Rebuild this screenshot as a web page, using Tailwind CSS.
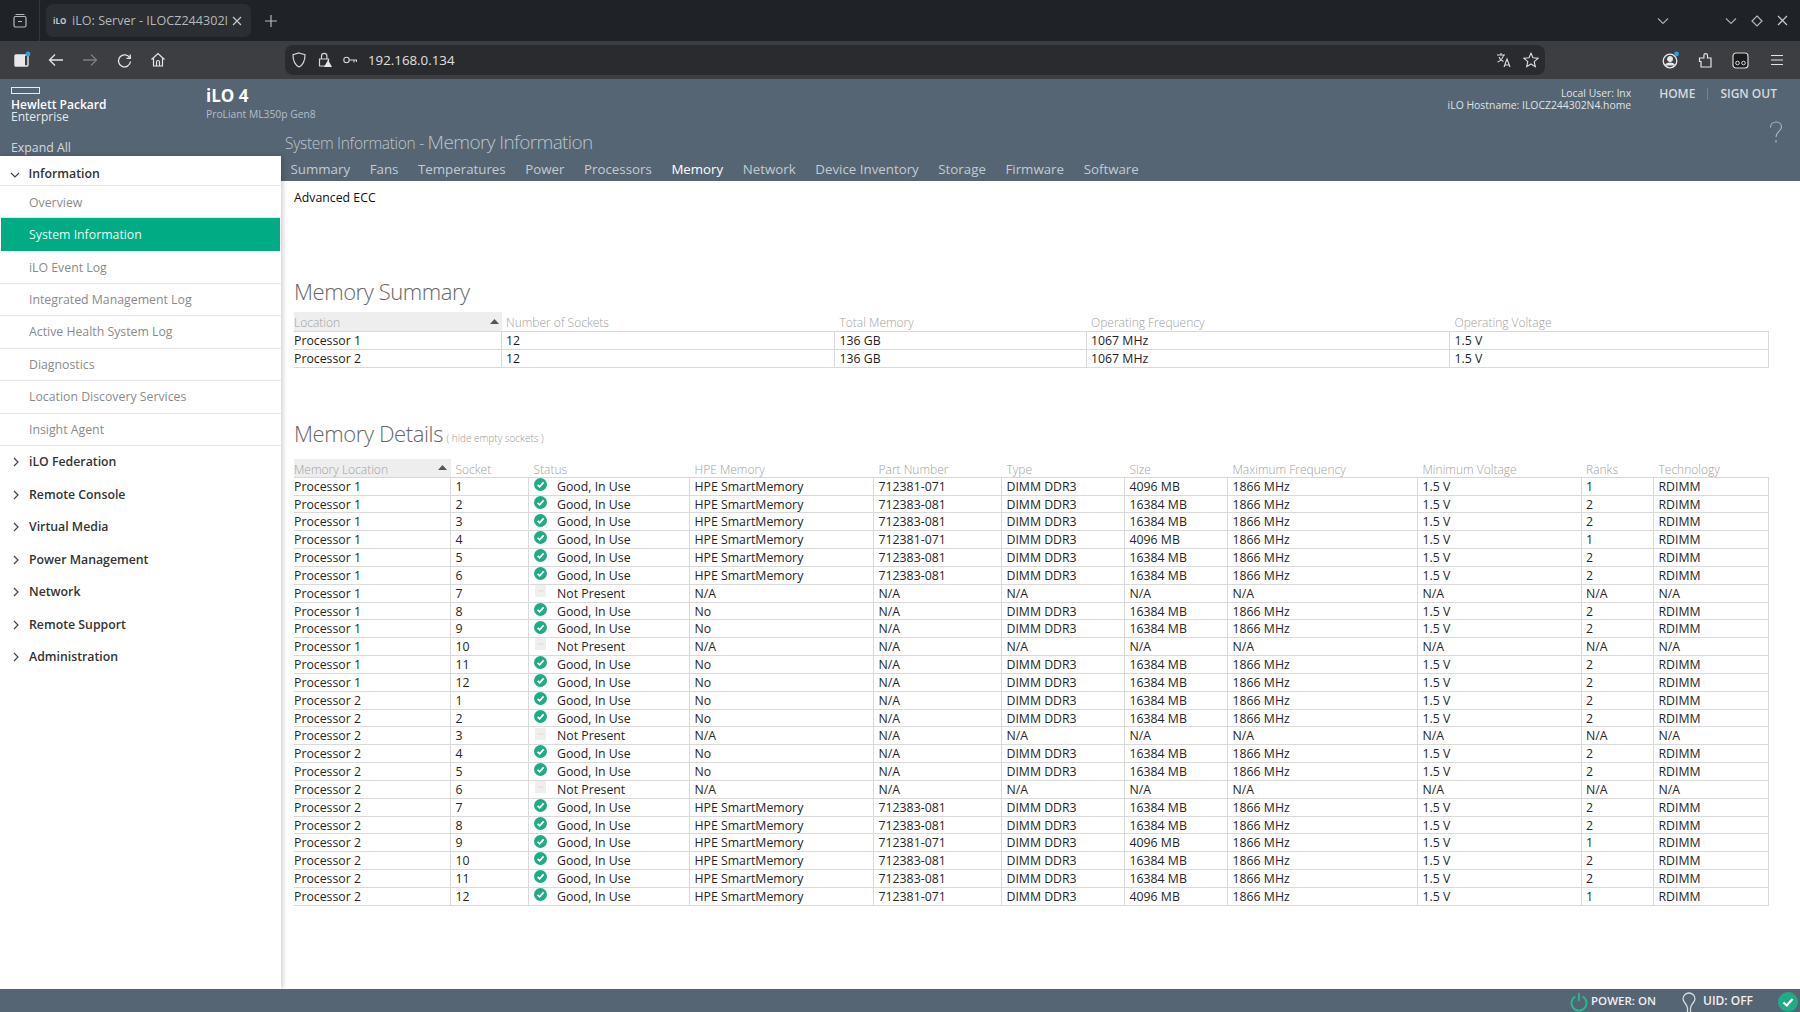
<!DOCTYPE html>
<html><head><meta charset="utf-8"><title>iLO</title>
<script src="https://cdn.jsdelivr.net/npm/@tailwindcss/browser@4"></script></head>
<body class="bg-white">
<svg class="hidden"><defs>
<symbol id="ok" viewBox="0 0 13 13"><circle cx="6.5" cy="6.5" r="6.5" fill="#1fab85"/><path d="M3.6 6.8 5.7 8.8 9.6 4.4" fill="none" stroke="#fff" stroke-width="1.8"/></symbol>
<symbol id="np" viewBox="0 0 13 13"><rect x="1" y="0" width="11" height="12" rx="1" fill="#efefef"/><rect x="3.5" y="5.5" width="6" height="1" fill="#dcdcdc"/></symbol>
<symbol id="cr" viewBox="0 0 8 12"><path d="M2 2 6 6 2 10" fill="none" stroke="#444" stroke-width="1.2"/></symbol>
</defs></svg>
<div class="w-[1800px] h-[1012px] flex flex-col overflow-hidden font-['Open_Sans',sans-serif] text-[12.3px]">

<!-- tab strip -->
<div class="h-[41px] bg-[#1f2226] flex items-center text-[#b9bcbf] shrink-0">
  <div class="w-[40px] h-full flex items-center justify-center border-r border-[#33363a]"><svg width="16" height="16" viewBox="0 0 16 16" fill="none" stroke="#b5b8bb" stroke-width="1.2"><rect x="2" y="3.5" width="12" height="10.5" rx="1.5"/><path d="M3.5 1.5h9M6 8.5h4"/></svg></div>
  <div class="ml-[6px] w-[205px] h-[33px] bg-[#2b2e32] rounded-[7px] flex items-center pl-[7px] pr-[9px] gap-[4px]">
    <span class="text-[8px] font-bold text-[#c9c9c9] w-[15px] shrink-0">iLO</span>
    <span class="text-[12.600px] flex-1 whitespace-nowrap text-[#b5b8bb] pt-[1px]">iLO: Server - ILOCZ244302I</span>
    <svg width="10" height="10" viewBox="0 0 10 10" stroke="#c4c6c8" stroke-width="1.3" class="shrink-0"><path d="M1 1 9 9M9 1 1 9"/></svg>
  </div>
  <div class="ml-[13px]"><svg width="14" height="14" viewBox="0 0 14 14" stroke="#b5b8bb" stroke-width="1.2"><path d="M7 1v12M1 7h12"/></svg></div>
  <div class="flex-1"></div>
  <svg width="12" height="8" viewBox="0 0 12 8" fill="none" stroke="#a8abae" stroke-width="1.2" class="mr-[56px]"><path d="M1 1.5 6 6.5 11 1.5"/></svg>
  <svg width="12" height="8" viewBox="0 0 12 8" fill="none" stroke="#a8abae" stroke-width="1.2" class="mr-[14px]"><path d="M1 1.5 6 6.5 11 1.5"/></svg>
  <svg width="12" height="12" viewBox="0 0 12 12" fill="none" stroke="#b5b8bb" stroke-width="1.2" class="mr-[14px]"><path d="M6 1 11 6 6 11 1 6Z"/></svg>
  <svg width="11" height="11" viewBox="0 0 11 11" fill="none" stroke="#c4c6c8" stroke-width="1.3" class="mr-[12px]"><path d="M1 1 10 10M10 1 1 10"/></svg>
</div>

<!-- toolbar -->
<div class="h-[38px] bg-[#3c3e41] flex items-center shrink-0 pl-[5px]">
  <div class="w-[34px] flex justify-center"><svg width="18" height="18" viewBox="0 0 18 18"><rect x="2" y="4" width="13" height="11" rx="1" fill="none" stroke="#e8e8e8" stroke-width="1.4"/><rect x="2" y="4" width="10" height="11" fill="#e8e8e8"/><circle cx="15" cy="3" r="2.4" fill="#2f9fe0"/></svg></div>
  <div class="w-[34px] flex justify-center"><svg width="16" height="14" viewBox="0 0 16 14" fill="none" stroke="#e4e4e4" stroke-width="1.3"><path d="M15 7H2M7 1.5 1.5 7 7 12.5"/></svg></div>
  <div class="w-[34px] flex justify-center"><svg width="16" height="14" viewBox="0 0 16 14" fill="none" stroke="#7b7d80" stroke-width="1.3"><path d="M1 7h13M9 1.5 14.500 7 9 12.500"/></svg></div>
  <div class="w-[34px] flex justify-center"><svg width="15" height="15" viewBox="0 0 15 15" fill="none" stroke="#e4e4e4" stroke-width="1.3"><path d="M12.800 5A6 6 0 1 0 13.500 8.500M13.300 1.500V5.300H9.500"/></svg></div>
  <div class="w-[34px] flex justify-center"><svg width="16" height="16" viewBox="0 0 16 16" fill="none" stroke="#e4e4e4" stroke-width="1.2"><path d="M1.500 7.500 8 1.500 14.500 7.500M3.500 6v8h9V6M6.500 14v-4a1.500 1.500 0 0 1 3 0v4"/></svg></div>
  <div class="ml-[110px] w-[1260px] h-[30px] bg-[#2a2b2e] rounded-[8px] flex items-center">
    <div class="w-[28px] flex justify-center"><svg width="14" height="16" viewBox="0 0 14 16" fill="none" stroke="#d4d4d4" stroke-width="1.2"><path d="M7 1 13 2.800C13 9 11 13 7 15 3 13 1 9 1 2.800Z"/></svg></div>
    <div class="w-[24px] flex justify-center"><svg width="14" height="16" viewBox="0 0 14 16"><path d="M3.500 7V4a2.700 2.700 0 0 1 5.400 0v3M1.500 7h9v7h-9Z" fill="none" stroke="#d4d4d4" stroke-width="1.2"/><path d="M10 8 14 15H6Z" fill="#e6e6e6"/></svg></div>
    <div class="w-[26px] flex justify-center"><svg width="15" height="8" viewBox="0 0 15 8" fill="none" stroke="#d4d4d4" stroke-width="1.1"><circle cx="3.500" cy="4" r="2.700"/><path d="M6.200 4H14M11 4v2.500M13.500 4v2"/></svg></div>
    <span class="ml-[5px] pt-[1px] text-[13.300px] text-[#e0e0e0]">192.168.0.134</span>
    <div class="flex-1"></div>
    <svg width="16" height="16" viewBox="0 0 16 16" fill="none" stroke="#e0e0e0" stroke-width="1.1" class="mr-[11px]"><path d="M1 3h8M5 1v2M7.500 3C7 6 4 9 1.500 10M3 5c1 2.500 3 4 4.500 4.500M8 15l3-8 3 8M9 13h4"/></svg>
    <svg width="16" height="16" viewBox="0 0 16 16" fill="none" stroke="#e0e0e0" stroke-width="1.1" class="mr-[6px]"><path d="M8 1.300 10 5.800 15 6.300 11.200 9.600 12.300 14.600 8 12 3.700 14.600 4.800 9.600 1 6.300 6 5.800Z"/></svg>
  </div>
  <div class="flex-1"></div>
  <div class="w-[34px] flex justify-center"><svg width="18" height="18" viewBox="0 0 18 18" fill="none" stroke="#e8e8e8" stroke-width="1.3"><circle cx="8" cy="10" r="6.800"/><circle cx="8" cy="8" r="2.300" fill="#e8e8e8"/><path d="M3.500 14.500c1-3 8-3 9 0" fill="#e8e8e8"/><circle cx="14.500" cy="3" r="2.400" fill="#2f9fe0" stroke="none"/></svg></div>
  <div class="w-[35px] flex justify-center"><svg width="16" height="16" viewBox="0 0 16 16" fill="none" stroke="#e4e4e4" stroke-width="1.2"><path d="M3 15h10V6H9.500V3.500a1.800 1.800 0 0 0-3.600 0V6H1.500v3.500H3Z"/></svg></div>
  <div class="w-[35px] flex justify-center"><svg width="17" height="17" viewBox="0 0 17 17"><rect x="1" y="1" width="15" height="15" rx="3" fill="#1b1b1d" stroke="#d8d8d8" stroke-width="1.2"/><circle cx="5.500" cy="11" r="1.800" fill="none" stroke="#d8d8d8"/><circle cx="11.500" cy="11" r="1.800" fill="none" stroke="#d8d8d8"/></svg></div>
  <div class="w-[37px] flex justify-center mr-[5px]"><svg width="14" height="12" viewBox="0 0 14 12" stroke="#e4e4e4" stroke-width="1.2"><path d="M1 1.500h12M1 6h12M1 10.500h12"/></svg></div>
</div>

<!-- top of app -->
<div class="h-[49px] bg-[#566573] flex shrink-0">
  <div class="w-[206px] shrink-0 pl-[11px] pt-[8px] leading-none">
    <div class="w-[29px] h-[7px] border-[1.5px] border-[#e8ecef]"></div>
    <div class="mt-[4px] text-[12px] font-semibold text-white leading-[13px] whitespace-nowrap">Hewlett Packard</div>
    <div class="text-[12px] text-[#e6e9ec] leading-[12px]">Enterprise</div>
  </div>
  <div class="pt-[6px]">
    <div class="text-[17px] font-bold text-white leading-[21px]">iLO 4</div>
    <div class="text-[10.300px] text-[#b4bec7] leading-[14px] pt-[0.5px]">ProLiant ML350p Gen8</div>
  </div>
  <div class="flex-1"></div>
  <div class="pt-[7.500px] text-[10.400px] text-[#dfe3e7] leading-[12px] text-right">
    <div>Local User: lnx</div>
    <div>iLO Hostname: ILOCZ244302N4.home</div>
  </div>
  <div class="ml-[28px] mr-[23px] mt-[7.500px] h-[14px] flex items-center text-[12px] font-semibold text-[#d5dade]">
    <span>HOME</span><span class="w-px h-[12px] bg-[#76838f] mx-[12px]"></span><span>SIGN OUT</span>
  </div>
</div>

<div class="h-[861px] flex shrink-0">
  <!-- left -->
  <div class="w-[281px] shrink-0 flex flex-col relative z-10">
    <div class="h-[28px] bg-[#566573] pl-[11px] text-[12.300px] text-[#d3d8dd] leading-[39px] shrink-0">Expand All</div>
    <div class="flex-1 bg-white shadow-[2px_0_5px_rgba(0,0,0,0.18)] text-[12.300px] text-[#8b8b8b]">
      <div class="h-[30px] pt-[8px] flex items-center border-b border-[#e6e6e6] font-semibold text-[#333]"><svg width="12" height="8" viewBox="0 0 12 8" fill="none" stroke="#444" stroke-width="1.200" class="ml-[9px] mr-[7.500px]"><path d="M2 2 6 6 10 2"/></svg>Information</div>
      <div class="h-[32px] pt-[4px] flex items-center pl-[29px] border-b border-[#e6e6e6]">Overview</div>
      <div class="h-[33px] pt-[2px] flex items-center pl-[28px] bg-[#01ac85] text-[#e6f7f2] mx-px">System Information</div>
      <div class="h-[32.500px] pt-[3px] flex items-center pl-[29px] border-b border-[#e6e6e6]">iLO Event Log</div>
      <div class="h-[32.500px] pt-[2px] flex items-center pl-[29px] border-b border-[#e6e6e6]">Integrated Management Log</div>
      <div class="h-[32.500px] pt-[1px] flex items-center pl-[29px] border-b border-[#e6e6e6]">Active Health System Log</div>
      <div class="h-[32.500px] pt-[2px] flex items-center pl-[29px] border-b border-[#e6e6e6]">Diagnostics</div>
      <div class="h-[32.500px] pt-[1px] flex items-center pl-[29px] border-b border-[#e6e6e6]">Location Discovery Services</div>
      <div class="h-[32.500px] pt-[2px] flex items-center pl-[29px] border-b border-[#e6e6e6]">Insight Agent</div>
      <div class="text-[#333] font-semibold [&>div]:h-[32.500px] [&>div]:flex [&>div]:items-center [&>div]:pl-[12px] [&_svg]:w-[8px] [&_svg]:h-[12px] [&_svg]:mr-[9px]">
        <div><svg><use href="#cr"/></svg>iLO Federation</div>
        <div><svg><use href="#cr"/></svg>Remote Console</div>
        <div><svg><use href="#cr"/></svg>Virtual Media</div>
        <div><svg><use href="#cr"/></svg>Power Management</div>
        <div><svg><use href="#cr"/></svg>Network</div>
        <div><svg><use href="#cr"/></svg>Remote Support</div>
        <div><svg><use href="#cr"/></svg>Administration</div>
      </div>
    </div>
  </div>
  <!-- right -->
  <div class="flex-1 flex flex-col min-w-0">
    <div class="h-[28px] bg-[#566573] pl-[4px] flex items-center justify-between text-[#bcc5cc] font-light shrink-0 whitespace-nowrap">
      <div class="flex items-baseline"><span class="text-[15.500px] tracking-[-0.3px]">System Information -&nbsp;</span><span class="text-[19px] tracking-[-0.6px]">Memory Information</span></div>
      <svg width="14" height="24" viewBox="0 0 14 24" fill="none" stroke="#aab4bd" stroke-width="1.200" class="mr-[17px] -mt-[18px] relative"><path d="M1.500 6.500C1.500 3 4 1 7 1s5.500 2 5.500 5c0 4-5.500 4.500-5.500 10"/><path d="M7 19v2.500"/></svg>
    </div>
    <div class="h-[25px] pt-[2px] bg-[#566573] flex items-center pl-[9.500px] text-[13.300px] text-[#c3cbd2] shrink-0 [&>span]:mr-[19.600px] whitespace-nowrap">
      <span>Summary</span><span>Fans</span><span>Temperatures</span><span>Power</span><span>Processors</span><span class="text-white">Memory</span><span>Network</span><span>Device Inventory</span><span>Storage</span><span>Firmware</span><span>Software</span>
    </div>
    <div class="flex-1 bg-white pl-[13px] pr-[31px] text-[#1d1d1d]">
      <div class="pt-[8px] leading-[18px] text-[#111]">Advanced ECC</div>
      <div class="mt-[66.500px] text-[22px] tracking-[-0.45px] leading-[34px] font-light text-[#666]">Memory Summary</div>
      <div class="mt-[4.500px] h-[20px] grid grid-rows-[20px] grid-cols-[207.500px_333.500px_251.500px_363.500px_319px] text-[12px] text-[#a2a2a2] font-light leading-[22px] [&>div]:pl-[4.500px] [&>div:first-child]:pl-0 [&>div]:border-b [&>div]:border-[#d8d8d8]">
        <div class="bg-[#eeeeee] flex justify-between items-start pr-[3px]">Location<svg width="9" height="14" viewBox="0 0 9 14" fill="#555" class="mt-[5px]"><path d="M0 7 4.500 2 9 7Z"/></svg></div><div>Number of Sockets</div><div>Total Memory</div><div>Operating Frequency</div><div>Operating Voltage</div>
      </div>
      <div class="grid grid-cols-[207.500px_333.500px_251.500px_363.500px_319px] auto-rows-[17.800px] leading-[18px] [&>div]:pl-[4.500px] [&>div:nth-child(5n+1)]:pl-0 [&>div]:border-b [&>div]:border-r [&>div]:border-[#dadada]">
        <div>Processor 1</div><div>12</div><div>136 GB</div><div>1067 MHz</div><div>1.5 V</div>
        <div>Processor 2</div><div>12</div><div>136 GB</div><div>1067 MHz</div><div>1.5 V</div>
      </div>
      <div class="mt-[48.700px] flex items-baseline whitespace-nowrap h-[35px] leading-[35px]"><span class="text-[22px] tracking-[-0.4px] font-light text-[#666]">Memory Details</span><span class="ml-[3.500px] text-[10px] font-light text-[#999]">( hide empty sockets )</span></div>
      <div class="mt-[7.500px] h-[19px] grid grid-rows-[19px] grid-cols-[157px_78px_161px_184px_128px_123px_103px_190px_163.500px_72.500px_115px] text-[12px] text-[#a2a2a2] font-light leading-[22px] [&>div]:pl-[4.500px] [&>div:first-child]:pl-0 [&>div]:border-b [&>div]:border-[#d8d8d8] whitespace-nowrap">
        <div class="bg-[#eeeeee] flex justify-between items-start pr-[4px]">Memory Location<svg width="9" height="14" viewBox="0 0 9 14" fill="#555" class="mt-[4px]"><path d="M0 7 4.500 2 9 7Z"/></svg></div><div>Socket</div><div>Status</div><div>HPE Memory</div><div>Part Number</div><div>Type</div><div>Size</div><div>Maximum Frequency</div><div>Minimum Voltage</div><div>Ranks</div><div>Technology</div>
      </div>
      <div class="grid grid-cols-[157px_78px_161px_184px_128px_123px_103px_190px_163.500px_72.500px_115px] auto-rows-[17.830px] leading-[18px] text-[#262626] whitespace-nowrap [&>div]:pl-[4.500px] [&>div:nth-child(11n+1)]:pl-0 [&>div]:border-b [&>div]:border-r [&>div]:border-[#dadada] [&_svg]:w-[13px] [&_svg]:h-[13px] [&_svg]:mr-[10px] [&_svg]:-mt-[6px] [&_svg]:ml-[0.500px] [&_svg]:inline-block">
<div>Processor 1</div><div>1</div><div><svg><use href="#ok"/></svg>Good, In Use</div><div>HPE SmartMemory</div><div>712381-071</div><div>DIMM DDR3</div><div>4096 MB</div><div>1866 MHz</div><div>1.5 V</div><div>1</div><div>RDIMM</div>
<div>Processor 1</div><div>2</div><div><svg><use href="#ok"/></svg>Good, In Use</div><div>HPE SmartMemory</div><div>712383-081</div><div>DIMM DDR3</div><div>16384 MB</div><div>1866 MHz</div><div>1.5 V</div><div>2</div><div>RDIMM</div>
<div>Processor 1</div><div>3</div><div><svg><use href="#ok"/></svg>Good, In Use</div><div>HPE SmartMemory</div><div>712383-081</div><div>DIMM DDR3</div><div>16384 MB</div><div>1866 MHz</div><div>1.5 V</div><div>2</div><div>RDIMM</div>
<div>Processor 1</div><div>4</div><div><svg><use href="#ok"/></svg>Good, In Use</div><div>HPE SmartMemory</div><div>712381-071</div><div>DIMM DDR3</div><div>4096 MB</div><div>1866 MHz</div><div>1.5 V</div><div>1</div><div>RDIMM</div>
<div>Processor 1</div><div>5</div><div><svg><use href="#ok"/></svg>Good, In Use</div><div>HPE SmartMemory</div><div>712383-081</div><div>DIMM DDR3</div><div>16384 MB</div><div>1866 MHz</div><div>1.5 V</div><div>2</div><div>RDIMM</div>
<div>Processor 1</div><div>6</div><div><svg><use href="#ok"/></svg>Good, In Use</div><div>HPE SmartMemory</div><div>712383-081</div><div>DIMM DDR3</div><div>16384 MB</div><div>1866 MHz</div><div>1.5 V</div><div>2</div><div>RDIMM</div>
<div>Processor 1</div><div>7</div><div><svg><use href="#np"/></svg>Not Present</div><div>N/A</div><div>N/A</div><div>N/A</div><div>N/A</div><div>N/A</div><div>N/A</div><div>N/A</div><div>N/A</div>
<div>Processor 1</div><div>8</div><div><svg><use href="#ok"/></svg>Good, In Use</div><div>No</div><div>N/A</div><div>DIMM DDR3</div><div>16384 MB</div><div>1866 MHz</div><div>1.5 V</div><div>2</div><div>RDIMM</div>
<div>Processor 1</div><div>9</div><div><svg><use href="#ok"/></svg>Good, In Use</div><div>No</div><div>N/A</div><div>DIMM DDR3</div><div>16384 MB</div><div>1866 MHz</div><div>1.5 V</div><div>2</div><div>RDIMM</div>
<div>Processor 1</div><div>10</div><div><svg><use href="#np"/></svg>Not Present</div><div>N/A</div><div>N/A</div><div>N/A</div><div>N/A</div><div>N/A</div><div>N/A</div><div>N/A</div><div>N/A</div>
<div>Processor 1</div><div>11</div><div><svg><use href="#ok"/></svg>Good, In Use</div><div>No</div><div>N/A</div><div>DIMM DDR3</div><div>16384 MB</div><div>1866 MHz</div><div>1.5 V</div><div>2</div><div>RDIMM</div>
<div>Processor 1</div><div>12</div><div><svg><use href="#ok"/></svg>Good, In Use</div><div>No</div><div>N/A</div><div>DIMM DDR3</div><div>16384 MB</div><div>1866 MHz</div><div>1.5 V</div><div>2</div><div>RDIMM</div>
<div>Processor 2</div><div>1</div><div><svg><use href="#ok"/></svg>Good, In Use</div><div>No</div><div>N/A</div><div>DIMM DDR3</div><div>16384 MB</div><div>1866 MHz</div><div>1.5 V</div><div>2</div><div>RDIMM</div>
<div>Processor 2</div><div>2</div><div><svg><use href="#ok"/></svg>Good, In Use</div><div>No</div><div>N/A</div><div>DIMM DDR3</div><div>16384 MB</div><div>1866 MHz</div><div>1.5 V</div><div>2</div><div>RDIMM</div>
<div>Processor 2</div><div>3</div><div><svg><use href="#np"/></svg>Not Present</div><div>N/A</div><div>N/A</div><div>N/A</div><div>N/A</div><div>N/A</div><div>N/A</div><div>N/A</div><div>N/A</div>
<div>Processor 2</div><div>4</div><div><svg><use href="#ok"/></svg>Good, In Use</div><div>No</div><div>N/A</div><div>DIMM DDR3</div><div>16384 MB</div><div>1866 MHz</div><div>1.5 V</div><div>2</div><div>RDIMM</div>
<div>Processor 2</div><div>5</div><div><svg><use href="#ok"/></svg>Good, In Use</div><div>No</div><div>N/A</div><div>DIMM DDR3</div><div>16384 MB</div><div>1866 MHz</div><div>1.5 V</div><div>2</div><div>RDIMM</div>
<div>Processor 2</div><div>6</div><div><svg><use href="#np"/></svg>Not Present</div><div>N/A</div><div>N/A</div><div>N/A</div><div>N/A</div><div>N/A</div><div>N/A</div><div>N/A</div><div>N/A</div>
<div>Processor 2</div><div>7</div><div><svg><use href="#ok"/></svg>Good, In Use</div><div>HPE SmartMemory</div><div>712383-081</div><div>DIMM DDR3</div><div>16384 MB</div><div>1866 MHz</div><div>1.5 V</div><div>2</div><div>RDIMM</div>
<div>Processor 2</div><div>8</div><div><svg><use href="#ok"/></svg>Good, In Use</div><div>HPE SmartMemory</div><div>712383-081</div><div>DIMM DDR3</div><div>16384 MB</div><div>1866 MHz</div><div>1.5 V</div><div>2</div><div>RDIMM</div>
<div>Processor 2</div><div>9</div><div><svg><use href="#ok"/></svg>Good, In Use</div><div>HPE SmartMemory</div><div>712381-071</div><div>DIMM DDR3</div><div>4096 MB</div><div>1866 MHz</div><div>1.5 V</div><div>1</div><div>RDIMM</div>
<div>Processor 2</div><div>10</div><div><svg><use href="#ok"/></svg>Good, In Use</div><div>HPE SmartMemory</div><div>712383-081</div><div>DIMM DDR3</div><div>16384 MB</div><div>1866 MHz</div><div>1.5 V</div><div>2</div><div>RDIMM</div>
<div>Processor 2</div><div>11</div><div><svg><use href="#ok"/></svg>Good, In Use</div><div>HPE SmartMemory</div><div>712383-081</div><div>DIMM DDR3</div><div>16384 MB</div><div>1866 MHz</div><div>1.5 V</div><div>2</div><div>RDIMM</div>
<div>Processor 2</div><div>12</div><div><svg><use href="#ok"/></svg>Good, In Use</div><div>HPE SmartMemory</div><div>712381-071</div><div>DIMM DDR3</div><div>4096 MB</div><div>1866 MHz</div><div>1.5 V</div><div>1</div><div>RDIMM</div>
      </div>
    </div>
  </div>
</div>

<!-- footer -->
<div class="h-[23px] bg-[#566573] flex items-center justify-end shrink-0 relative z-20 text-[12px] font-semibold text-[#eef0f2] whitespace-nowrap overflow-hidden">
  <svg width="18" height="20" viewBox="0 0 18 20" fill="none" stroke="#22bd94" stroke-width="1.800" class="mr-[3px] mt-[2px]"><path d="M5.500 4.500a7.500 7.500 0 1 0 7 0M9 1v8"/></svg>
  <span class="text-[11.500px]">POWER: ON</span>
  <svg width="14" height="22" viewBox="0 0 14 22" fill="none" stroke="#d4d9dd" stroke-width="1.300" class="ml-[26px] mr-[7px] mt-[4px]"><path d="M7 1a6 6 0 0 0-6 6c0 3 4 5 4.500 9v5h3v-5C9 12 13 10 13 7a6 6 0 0 0-6-6Z"/></svg>
  <span class="mt-[1px]">UID: OFF</span>
  <svg width="20" height="20" viewBox="0 0 20 20" class="ml-[25px] mr-[2px] mt-[3px]"><circle cx="10" cy="10" r="10" fill="#1fab85"/><path d="M5.500 10.500 8.800 13.500 14.500 7" fill="none" stroke="#fff" stroke-width="2.200"/></svg>
</div>
</div>
</body></html>
